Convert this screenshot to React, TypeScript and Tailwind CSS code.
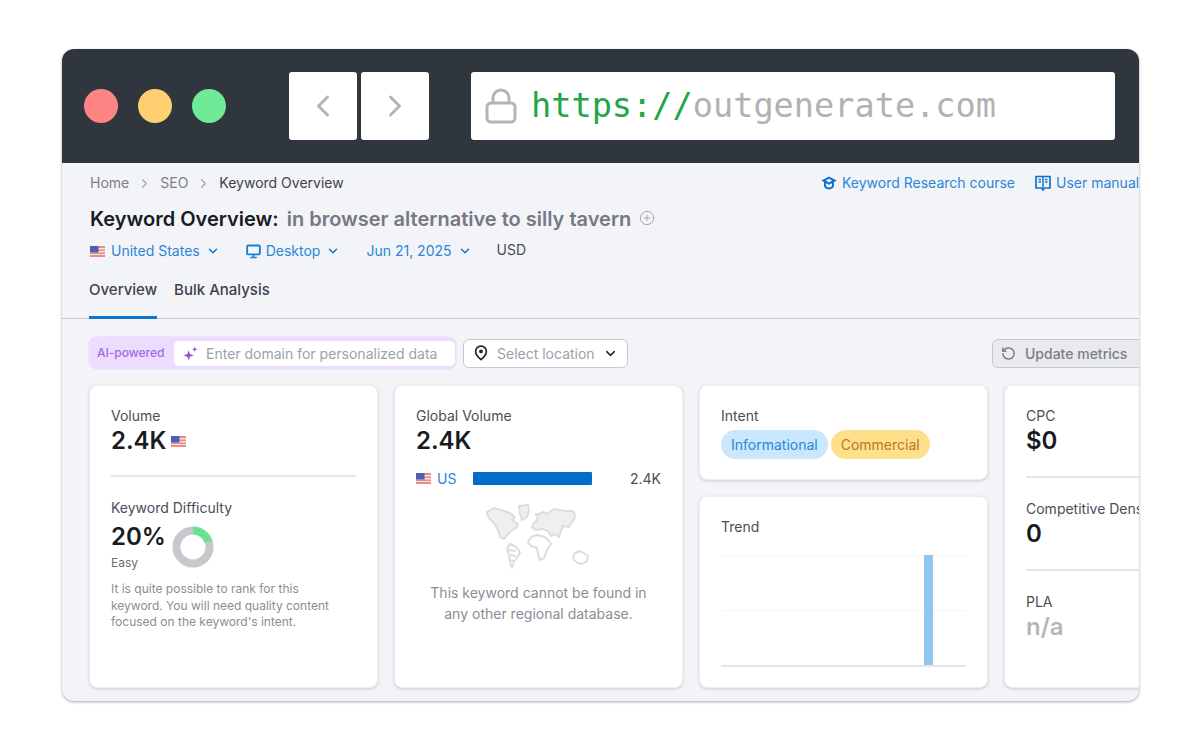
import { ChevronDown, ChevronLeft, ChevronRight, CirclePlus, RotateCw } from 'lucide-react'

function UsFlag({ className = '' }: { className?: string }) {
  return (
    <svg viewBox="0 0 15 11" className={className}>
      <rect width="15" height="11" fill="#e98b86" />
      <rect y="2" width="15" height="1.5" fill="#f5e4e2" />
      <rect y="5" width="15" height="1.5" fill="#f5e4e2" />
      <rect y="8" width="15" height="1" fill="#f5e4e2" />
      <rect width="8.5" height="6.5" fill="#4a5fb5" />
    </svg>
  )
}

function LockIcon() {
  return (
    <svg viewBox="0 0 32 36" className="h-[36px] w-[32px]" fill="none" stroke="#b4b4b4" strokeWidth="3">
      <rect x="2" y="15" width="28" height="19" rx="4" />
      <path d="M8 15V10a8 8 0 0 1 16 0v5" />
    </svg>
  )
}

function MonitorIcon() {
  return (
    <svg viewBox="0 0 16 16" className="h-[15px] w-[15px]" fill="none">
      <rect x="1.2" y="1.6" width="13.6" height="9.4" rx="1" stroke="#1a7fd4" strokeWidth="2" />
      <path d="M4.5 14.4h7M8 11v3" stroke="#1a7fd4" strokeWidth="1.8" />
    </svg>
  )
}

function CapIcon() {
  return (
    <svg viewBox="0 0 16 14" className="h-[14px] w-[16px]" fill="#0d75cf">
      <path d="M8 .5 .3 4.6 3 6v3.6C3 11.8 5.4 13.500 8 13.500s5-1.700 5-3.900V6l2.700-1.400L8 .500Zm0 2.200 3.200 1.900L8 6.400 4.800 4.600 8 2.700Zm3 4.500v2.400c0 1-1.300 1.900-3 1.900s-3-.9-3-1.900V7.200l3 1.500 3-1.500Z" />
    </svg>
  )
}

function BookIcon() {
  return (
    <svg viewBox="0 0 16 16" className="h-[16px] w-[16px]" fill="none">
      <path d="M1 1.500h14v11.500H9.200L8 15l-1.200-2H1V1.500Z" stroke="#0d75cf" strokeWidth="1.700" />
      <path d="M8 2v10.500" stroke="#0d75cf" strokeWidth="1.500" />
      <path d="M3.500 4.500h2.500M3.500 7h2.500M10 4.500h2.500M10 7h2.500" stroke="#0d75cf" strokeWidth="1.500" />
    </svg>
  )
}

function SparkleIcon() {
  return (
    <svg viewBox="0 0 16 16" className="h-[15px] w-[15px]" fill="#9a4fe0">
      <path d="M6 4.500 7.400 8.600 11.500 10 7.400 11.400 6 15.500 4.600 11.400.5 10l4.100-1.400L6 4.500Z" />
      <path d="M12.500.5 13.300 2.700 15.500 3.500 13.300 4.300 12.500 6.500 11.700 4.300 9.500 3.500 11.700 2.700 12.500.5Z" />
    </svg>
  )
}

function PinIcon() {
  return (
    <svg viewBox="0 0 14 17" className="h-[16px] w-[14px]" fill="none">
      <path d="M7 15.500C3.500 12.500 1.300 10 1.300 6.800a5.700 5.700 0 0 1 11.400 0C12.700 10 10.500 12.500 7 15.500Z" stroke="#24262e" strokeWidth="1.800" />
      <circle cx="7" cy="6.800" r="2" fill="#24262e" />
    </svg>
  )
}

function Donut() {
  return (
    <svg viewBox="0 0 42 42" className="h-[42px] w-[42px] shrink-0">
      <circle cx="21" cy="21" r="16.500" fill="none" stroke="#c7c8ce" strokeWidth="8" />
      <path d="M21 4.500A16.500 16.500 0 0 1 36.700 15.900" fill="none" stroke="#6ee591" strokeWidth="8" />
      <g fill="#3f8fd0">
        <circle cx="24" cy="3" r=".5" />
        <circle cx="27" cy="4" r=".5" />
        <circle cx="30" cy="6" r=".5" />
        <circle cx="25" cy="6" r=".5" />
        <circle cx="29" cy="9" r=".5" />
        <circle cx="33" cy="10" r=".5" />
        <circle cx="35" cy="13" r=".5" />
      </g>
    </svg>
  )
}

function WorldMap() {
  return (
    <svg viewBox="0 0 106 66" className="h-[66px] w-[106px]" fill="#eeeff1" stroke="#dcdde1" strokeWidth="2" strokeLinejoin="round">
      <path d="M1 9 8 5l7 2 9 3 5 4-3 3 3 2 3 2-2 4-5 3-4 4-3 4-4-2-2-7-4-7-5-5-2-4Z" />
      <path d="M33 3l9-1 1 5-2 7-5 3-2-6-1-8Z" />
      <path d="M24 41l6 3 4 5-3 6-3 4-2 6-2-5-1-8-2-6 3-5Z" fill="none" />
      <path d="M21 47l9 1M23 52l7 1M24 57l4 1" />
      <path d="M50 12l8-3 3 2 7-5 5 1 6 1 8 0 2 3-1 6-3 3-2 4-6-1-2 4-2 7-4-3-4 2-3-5-6-2-6 1-4-3 2-4 3-3 1-3-2-3Z" />
      <path d="M45 34l6-2 8 2 4 4 2 3-4 6-3 8-4 2-2-6-1-6-6-2-3-4 3-5Z" fill="none" />
      <path d="M89 50l5-2 5 3 3 2-1 5-5 3-4-1-4-3-1-3 2-4Z" fill="none" />
    </svg>
  )
}

function Card({ className = '', children }: { className?: string; children: React.ReactNode }) {
  return (
    <div className={`rounded-lg border border-[#eceef2] bg-white shadow-[0_1px_3px_rgba(40,45,60,0.2)] ${className}`}>
      {children}
    </div>
  )
}

function Label({ children }: { children: React.ReactNode }) {
  return <div className="text-[14px] leading-[18px] text-[#4b4d57]">{children}</div>
}

function Value({ children }: { children: React.ReactNode }) {
  return <div className="text-[24px] leading-[32px] font-semibold text-[#191b23]">{children}</div>
}

export default function App() {
  return (
    <div className="h-[750px] w-[1200px] overflow-hidden bg-white pt-[49px] pl-[62px] font-['Inter',sans-serif]">
      <div className="flex h-[652px] w-[1077px] flex-col overflow-hidden rounded-xl bg-[#f3f4f8] shadow-[0_1px_3px_rgba(0,0,0,0.35)]">
        <div className="flex h-[114px] shrink-0 items-center bg-[#2f363d] pl-[22px]">
          <div className="flex gap-[20px]">
            <div className="h-[34px] w-[34px] rounded-full bg-[#ff8585]" />
            <div className="h-[34px] w-[34px] rounded-full bg-[#ffcf70]" />
            <div className="h-[34px] w-[34px] rounded-full bg-[#70ea96]" />
          </div>
          <div className="ml-[63px] flex gap-[4px]">
            <div className="flex h-[68px] w-[68px] items-center justify-center rounded-[3px] bg-white">
              <ChevronLeft className="h-[36px] w-[36px] text-[#b4b4b4]" strokeWidth={2} />
            </div>
            <div className="flex h-[68px] w-[68px] items-center justify-center rounded-[3px] bg-white">
              <ChevronRight className="h-[36px] w-[36px] text-[#b4b4b4]" strokeWidth={2} />
            </div>
          </div>
          <div className="ml-[42px] flex h-[68px] w-[644px] items-center gap-[14px] rounded-[3px] bg-white pl-[14px] font-['DejaVu_Sans_Mono',monospace] text-[33.6px]">
            <LockIcon />
            <div>
              <span className="text-[#22a447]">https://</span>
              <span className="text-[#b2b2b4]">outgenerate.com</span>
            </div>
          </div>
        </div>

        <div className="flex flex-1 flex-col overflow-hidden">
          <div className="flex shrink-0 items-center justify-between pt-[11px] pl-[28px] text-[14px] leading-[18px]">
            <div className="flex items-center gap-[8px] text-[#7b7d87]">
              <span>Home</span>
              <ChevronRight className="h-[15px] w-[15px] text-[#a4a6ae]" />
              <span>SEO</span>
              <ChevronRight className="h-[15px] w-[15px] text-[#a4a6ae]" />
              <span className="text-[#3f414b]">Keyword Overview</span>
            </div>
            <div className="flex w-[318px] shrink-0 items-center gap-[20px] overflow-hidden whitespace-nowrap text-[#2a86d8]">
              <span className="flex shrink-0 items-center gap-[5px]">
                <CapIcon />
                Keyword Research course
              </span>
              <span className="flex shrink-0 items-center gap-[5px]">
                <BookIcon />
                User manual
              </span>
            </div>
          </div>

          <div className="mt-[13px] flex items-center gap-[8px] pl-[28px] text-[20px] leading-[28px] font-semibold">
            <span className="text-[#191b23]">Keyword Overview:</span>
            <span className="text-[#767882]">in browser alternative to silly tavern</span>
            <CirclePlus className="h-[16px] w-[16px] -translate-y-[1px] text-[#a4a6ae]" strokeWidth={1.5} />
          </div>

          <div className="mt-[8px] flex items-center pl-[28px] text-[14px] leading-[20px] text-[#2a86d8]">
            <UsFlag className="h-[11px] w-[15px]" />
            <span className="ml-[6px]">United States</span>
            <ChevronDown className="ml-[6px] h-[14px] w-[14px] text-[#0d75cf]" strokeWidth={2.5} />
            <span className="ml-[26px]">
              <MonitorIcon />
            </span>
            <span className="ml-[5px]">Desktop</span>
            <ChevronDown className="ml-[6px] h-[14px] w-[14px] text-[#0d75cf]" strokeWidth={2.5} />
            <span className="ml-[26px]">Jun 21, 2025</span>
            <ChevronDown className="ml-[6px] h-[14px] w-[14px] text-[#0d75cf]" strokeWidth={2.5} />
            <span className="ml-[25px] -translate-y-[1px] text-[#4b4d57]">USD</span>
          </div>

          <div className="mt-[19px] flex h-[39px] shrink-0 gap-[17px] border-b border-[#c6c8d0] pl-[27px] text-[15px] font-medium text-[#3f414b]">
            <div className="h-[39px] border-b-[3px] border-[#0d75cf] pt-[0px] leading-[20px]">Overview</div>
            <div className="leading-[20px]">Bulk Analysis</div>
          </div>

          <div className="mt-[18px] flex h-[32px] w-[1090px] shrink-0 items-center pl-[27px]">
            <div className="flex h-[32px] w-[368px] items-center rounded-lg bg-[#ecdcfd] pl-[8px] shadow-[0_0_0_1px_#f0e4fd]">
              <span className="w-[76px] shrink-0 text-[12px] font-medium text-[#a068ea]">AI-powered</span>
              <div className="flex h-[27px] w-[283px] items-center gap-[8px] rounded-md border border-[#ecdcfd] bg-white pl-[9px] text-[14px] whitespace-nowrap text-[#9ea0a9]">
                <SparkleIcon />
                Enter domain for personalized data
              </div>
            </div>
            <div className="ml-[7px] flex h-[29px] w-[169px] items-center rounded-md border border-[#c6c8d0] bg-white pl-[10px] text-[14px] text-[#9ea0a9]">
              <PinIcon />
              <span className="ml-[9px]">Select location</span>
              <ChevronDown className="ml-[8px] h-[15px] w-[15px] text-[#24262e]" strokeWidth={2.5} />
            </div>
            <div className="ml-[364px] flex h-[29px] w-[160px] shrink-0 items-center rounded-md border border-[#c6c8d0] bg-[#e9eaee] pl-[8px] text-[14px] font-medium text-[#7b7d87]">
              <RotateCw className="h-[15px] w-[15px] -scale-x-100 text-[#6c6e79]" strokeWidth={2} />
              <span className="ml-[9px] whitespace-nowrap">Update metrics</span>
            </div>
          </div>

          <div className="mt-[16px] flex w-[1240px] gap-[16px] pl-[27px]">
            <Card className="h-[303px] w-[289px] shrink-0 px-[21px] pt-[21px]">
              <Label>Volume</Label>
              <div className="flex items-center gap-[5px]">
                <Value>2.4K</Value>
                <UsFlag className="h-[11px] w-[15px]" />
              </div>
              <div className="mt-[18px] h-[2px] bg-[#e4e5ea]" />
              <div className="mt-[22px]">
                <Label>Keyword Difficulty</Label>
              </div>
              <div className="mt-[4px] flex">
                <div className="w-[61px]">
                  <Value>20%</Value>
                  <div className="mt-[2px] text-[12px] leading-[16px] text-[#6c6e79]">Easy</div>
                </div>
                <div className="mt-[5px]">
                  <Donut />
                </div>
              </div>
              <p className="mt-[10px] text-[12px] leading-[16.500px] text-[#8b8d96]">
                It is quite possible to rank for this
                <br />
                keyword. You will need quality content
                <br />
                focused on the keyword's intent.
              </p>
            </Card>

            <Card className="h-[303px] w-[289px] shrink-0 px-[21px] pt-[21px]">
              <Label>Global Volume</Label>
              <Value>2.4K</Value>
              <div className="mt-[11px] flex h-[20px] items-center text-[14px]">
                <UsFlag className="h-[11px] w-[15px]" />
                <span className="ml-[6px] w-[36px] text-[#2a86d8]">US</span>
                <div className="h-[13px] w-[119px] rounded-[1px] bg-[#006dca]" />
                <span className="ml-auto text-[#4b4d57]">2.4K</span>
              </div>
              <div className="mt-[15px] flex justify-center">
                <WorldMap />
              </div>
              <p className="mt-[13px] text-center text-[14px] leading-[21px] text-[#8b8d96]">
                This keyword cannot be found in
                <br />
                any other regional database.
              </p>
            </Card>

            <div className="flex w-[289px] shrink-0 flex-col gap-[16px]">
              <Card className="h-[95px] px-[21px] pt-[21px]">
                <Label>Intent</Label>
                <div className="mt-[5px] flex gap-[3px] text-[14px] leading-[29px]">
                  <span className="rounded-full bg-[#c9e8fd] px-[10px] text-[#2a86d8]">Informational</span>
                  <span className="rounded-full bg-[#ffe08a] px-[10px] text-[#b9781f]">Commercial</span>
                </div>
              </Card>
              <Card className="h-[192px] px-[21px] pt-[21px]">
                <Label>Trend</Label>
                <div className="relative mt-[19px] flex h-[112px] flex-col justify-between border-b-2 border-[#e4e5ea]">
                  <div className="h-px bg-[#f5f5f7]" />
                  <div className="h-px bg-[#f5f5f7]" />
                  <div />
                  <div className="absolute top-0 right-[33px] bottom-0 w-[9px] bg-[#8fc7f0]" />
                </div>
              </Card>
            </div>

            <Card className="h-[303px] w-[289px] shrink-0 pt-[21px] pl-[21px]">
              <Label>CPC</Label>
              <Value>$0</Value>
              <div className="mt-[19px] h-[2px] bg-[#e4e5ea]" />
              <div className="mt-[22px]">
                <Label>Competitive Density</Label>
              </div>
              <Value>0</Value>
              <div className="mt-[19px] h-[2px] bg-[#e4e5ea]" />
              <div className="mt-[22px]">
                <Label>PLA</Label>
              </div>
              <div className="text-[24px] leading-[32px] font-semibold text-[#b5b6bc]">n/a</div>
            </Card>
          </div>
        </div>
      </div>
    </div>
  )
}
